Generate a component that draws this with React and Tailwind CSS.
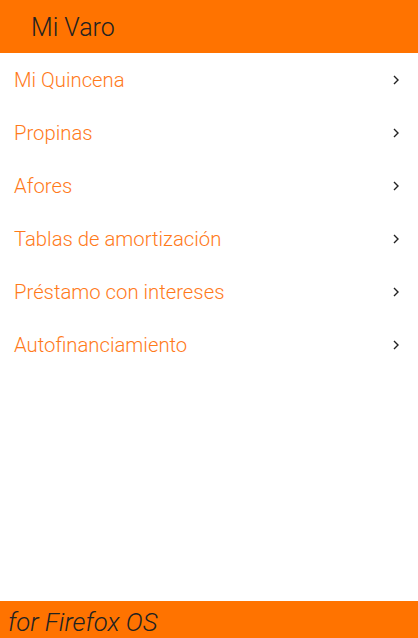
import React from "react";

const items = [
  "Mi Quincena",
  "Propinas",
  "Afores",
  "Tablas de amortización",
  "Préstamo con intereses",
  "Autofinanciamiento",
];

const Chevron = () => (
  <svg width="6" height="10" viewBox="0 0 6 10" fill="none" className="shrink-0">
    <path d="M1 1l4 4-4 4" stroke="#222" strokeWidth="1.4" />
  </svg>
);

export default function App() {
  return (
    <div
      className="flex h-[638px] w-[418px] flex-col bg-white"
      style={{ fontFamily: "Roboto, 'Noto Sans', sans-serif" }}
    >
      <header className="flex h-[53px] shrink-0 items-center bg-[#ff7300] pl-[31px] pt-[2px]">
        <h1 className="text-[25px] font-light leading-none text-[#222]">Mi Varo</h1>
      </header>

      <ul className="flex-1">
        {items.map((item) => (
          <li
            key={item}
            className="flex h-[53px] items-center justify-between pl-[14px] pr-[19px]"
          >
            <span className="pt-[2px] text-[20.3px] font-light text-[#ff7a1a]">{item}</span>
            <Chevron />
          </li>
        ))}
      </ul>

      <footer className="flex h-[37px] shrink-0 items-center bg-[#ff7300] pl-[8px] pt-[6px]">
        <span className="text-[25.7px] font-light italic leading-none text-[#222]">
          for Firefox OS
        </span>
      </footer>
    </div>
  );
}
